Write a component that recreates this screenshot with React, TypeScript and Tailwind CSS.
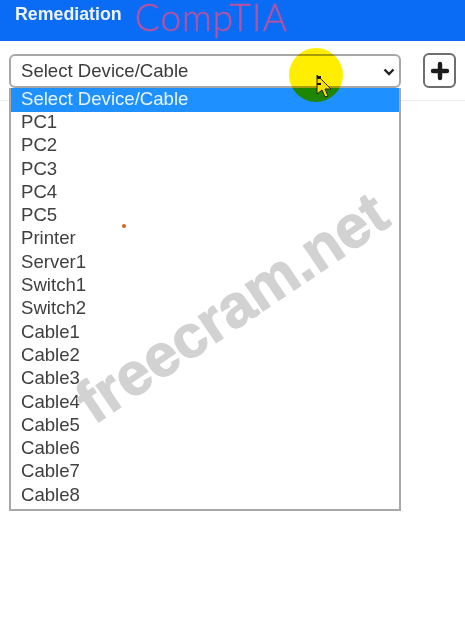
import React from "react";

const items = ["PC1","PC2","PC3","PC4","PC5","Printer","Server1","Switch1","Switch2","Cable1","Cable2","Cable3","Cable4","Cable5","Cable6","Cable7","Cable8"];

export default function App() {
  return (
    <div className="relative w-[465px] h-[620px] overflow-hidden bg-white font-['Liberation_Sans',Arial,sans-serif]">
      <header className="flex items-start gap-[13px] h-[41px] bg-[#0a6cf5] pl-[15px] overflow-hidden">
        <span className="pt-[4px] text-[17.8px] leading-[20px] font-bold text-[#eef4ff]">Remediation</span>
        <span className="-mt-[3px] text-[37px] leading-[40px] font-light tracking-[1px] text-[#b9529f] [-webkit-text-stroke:0.4px_#b9529f] font-['Lato',sans-serif]">CompTIA</span>
      </header>
      <div className="relative flex items-start gap-[22px] h-[60px] border-b border-[#ececec] pt-[13px] pl-[9px]">
        <select className="appearance-none w-[392px] h-[34px] rounded-[6px] border-2 border-[#a8a8a8] bg-white pl-[10px] text-[18.6px] text-[#3c3c3c]">
          <option>Select Device/Cable</option>
        </select>
        <svg className="absolute left-[383px] top-[27px]" width="12" height="8" viewBox="0 0 12 8"><path d="M1.5 1.5L6 6l4.5-4.5" fill="none" stroke="#222" strokeWidth="2.4" /></svg>
        <button className="-mt-[1px] flex items-center justify-center w-[33px] h-[35px] rounded-[6px] border-2 border-[#6e6e6e] bg-white">
          <svg width="20" height="20" viewBox="0 0 20 20"><path d="M10 3v14M3 10h14" stroke="#1c1c1c" strokeWidth="4.4" strokeLinecap="round" /></svg>
        </button>
        <ul className="absolute left-[9px] top-[47px] flex flex-col w-[392px] h-[423px] border-2 border-t-0 border-[#a8a8a8] bg-white text-[18.6px] text-[#404040]">
          <li className="h-[24px] leading-[22px] bg-[#1e90ff] pl-[10px] text-[#e8f4ff]">Select Device/Cable</li>
          {items.map((t) => (
            <li key={t} className="h-[23.3px] leading-[20px] pl-[10px]">{t}</li>
          ))}
        </ul>
      </div>
      <div className="absolute left-[289px] top-[48px] w-[54px] h-[54px] rounded-full bg-[#ffee00] mix-blend-multiply" />
      <svg className="absolute left-[315px] top-[73px]" width="18" height="26" viewBox="0 0 18 26">
        <path d="M2 2v19l5-4 3 7 3-1-3-7h6z" fill="#f7e000" stroke="#222" strokeWidth="1" />
        <path d="M2 3h4v3H2zM2 10h4v2H2z" fill="#111" />
      </svg>
      <span className="absolute left-[122px] top-[224px] w-[4px] h-[4px] rounded-full bg-[#d9602a]" />
      <span className="absolute left-[32px] top-[276px] w-[400px] text-center text-[60px] leading-[64px] font-bold text-[#d2d2d2] [-webkit-text-stroke:1.2px_#d2d2d2] -rotate-[34deg] font-['Liberation_Sans',sans-serif]">freecram.net</span>
    </div>
  );
}
